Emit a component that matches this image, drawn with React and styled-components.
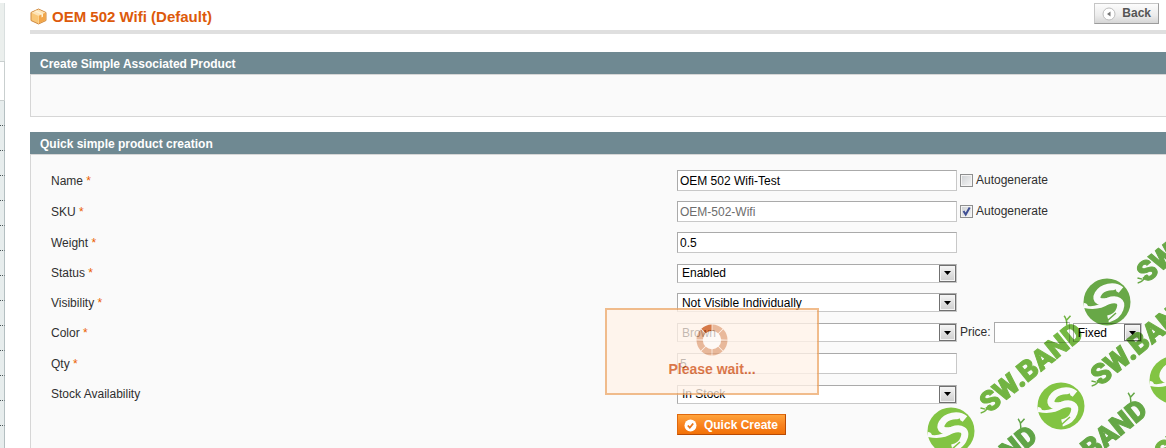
import React from 'react';
import styled, { createGlobalStyle } from 'styled-components';

const Global = createGlobalStyle`
  * { box-sizing: border-box; }
  body {
    margin: 0;
    background: #fff;
    color: #2f2f2f;
    font: 12px/15px "Liberation Sans", Arial, sans-serif;
  }
`;

const Page = styled.div`
  display: flex;
  min-height: 100vh;
`;

const Sidebar = styled.aside`
  display: flex;
  flex-direction: column;
  flex: none;
  width: 5px;
  padding-top: 3px;
`;

const SideTop = styled.div`
  height: 58px;
  background: #ebefed;
  border-right: 1px solid #d9dfdf;
`;

const SideCurrent = styled.div`
  height: 40px;
  background: #fff;
  border: solid #c9cfcf;
  border-width: 1px 1px 1px 0;
`;

const SideItem = styled.div`
  height: 25px;
  background: #e7eded;
  border-right: 1px solid #b4bfc1;
  border-bottom: 1px dotted #4a5658;
  &:last-child {
    flex: 1;
    height: auto;
    border-bottom: 0;
  }
`;

const Main = styled.main`
  display: flex;
  flex-direction: column;
  flex: 1;
  min-width: 0;
  padding-left: 25px;
`;

const Header = styled.header`
  display: flex;
  align-items: center;
  justify-content: space-between;
  height: 34px;
  padding: 0 7px 4px 0;
  border-bottom: 4px solid #dfdfdf;
  margin-bottom: 18px;
`;

const Title = styled.h1`
  display: flex;
  align-items: center;
  gap: 5px;
  margin: 0;
  padding-top: 7px;
  color: #dd5a0b;
  font-size: 15px;
  line-height: 18px;
`;

const Button = styled.button`
  display: flex;
  align-items: center;
  gap: ${p => (p.$primary ? 7 : 6)}px;
  height: 21px;
  padding: 1px 7px 0 ${p => (p.$primary ? 6 : 7)}px;
  border: 1px solid;
  border-color: ${p => (p.$primary ? '#e0680c #b84a04 #b84a04 #e0680c' : '#c6c6c6 #9c9c9c #9c9c9c #c6c6c6')};
  background: ${p => (p.$primary
    ? 'linear-gradient(#ffa43c, #f98320 50%, #f27108)'
    : 'linear-gradient(#fcfcfc, #ececec 60%, #d6d6d6)')};
  color: ${p => (p.$primary ? '#fff' : '#555')};
  font: bold 12px/15px "Liberation Sans", Arial, sans-serif;
`;

const Panel = styled.section`
  display: flex;
  flex-direction: column;
  flex: ${p => (p.$fill ? '1' : 'none')};
  margin-bottom: ${p => (p.$fill ? 0 : 15)}px;
`;

const PanelTitle = styled.h2`
  margin: 0;
  padding: 5px 10px 2px;
  background: #6f8992;
  color: #fff;
  font-size: 12px;
  line-height: 15px;
`;

const PanelBody = styled.div`
  flex: 1;
  min-height: 43px;
  padding: 10px 0 0 20px;
  border: solid #d6d6d6;
  border-width: 1px 0 ${p => (p.$open ? 0 : 1)}px 1px;
  background: #fafafa;
`;

const Row = styled.div`
  display: grid;
  grid-template-columns: 1.28fr 1fr;
  align-items: center;
  min-height: ${p => p.$height || 31}px;
`;

const Label = styled.label`
  justify-self: start;
  padding-top: 1px;
`;

const Required = styled.span`
  color: #eb5e00;
`;

const Controls = styled.div`
  display: flex;
  align-items: center;
  gap: 3px;
`;

const Input = styled.input`
  width: ${p => p.$width}px;
  height: 21px;
  padding: 0 2px;
  border: 1px solid;
  border-color: #aaa #c8c8c8 #c8c8c8 #aaa;
  border-radius: 0;
  background: #fff;
  color: ${p => (p.disabled ? '#6d6d6d' : '#000')};
  font: inherit;
`;

const SelectBox = styled.div`
  display: grid;
  width: ${p => p.$width}px;
  height: 19px;
  > * { grid-area: 1 / 1; }
`;

const SelectInput = styled.select`
  appearance: none;
  width: 100%;
  height: 19px;
  padding: 1px 18px 0 4px;
  border: 1px solid;
  border-color: #aaa #c8c8c8 #c8c8c8 #aaa;
  border-radius: 0;
  background: #fff;
  color: #000;
  font: inherit;
`;

const Arrow = styled.span`
  display: flex;
  align-items: center;
  justify-content: center;
  align-self: center;
  justify-self: end;
  width: 17px;
  height: 17px;
  margin-right: 1px;
  border: 1px solid #707070;
  background: linear-gradient(#f6f6f6, #dcdcdc 60%, #cfcfcf);
  box-shadow: inset 0 0 0 1px #f4f4f4;
  pointer-events: none;
`;

const Check = styled.label`
  display: flex;
  align-items: center;
  gap: 3px;
`;

const CheckBox = styled.span`
  display: grid;
  > * { grid-area: 1 / 1; }
  svg { pointer-events: none; }
`;

const CheckInput = styled.input`
  appearance: none;
  width: 13px;
  height: 13px;
  margin: 0;
  border: 1px solid #8e8f8f;
  background: linear-gradient(135deg, #cdd0d3, #f6f6f6);
  box-shadow: inset 0 0 0 1px #f4f4f4;
`;

const Loader = styled.div`
  position: fixed;
  top: 308px;
  left: 605px;
  display: flex;
  flex-direction: column;
  align-items: center;
  gap: 4px;
  width: 214px;
  height: 87px;
  padding-top: 14px;
  border: 2px solid #eda868;
  background: #fff2e8;
  color: #d04e10;
  font-size: 14px;
  font-weight: bold;
  line-height: 18px;
  opacity: 0.76;
`;

const Watermark = styled.svg`
  position: fixed;
  right: 0;
  bottom: 0;
  width: 266px;
  height: 218px;
  overflow: hidden;
  pointer-events: none;
  mix-blend-mode: multiply;
  font: 900 28px Roboto, "Liberation Sans", Arial, sans-serif;
`;

const BoxIcon = () => (
  <svg width="17" height="17" viewBox="0 0 17 17" aria-hidden="true">
    <path d="M1 4.500 8.500 1 16 4.500v8L8.500 16 1 12.500z" fill="#f9c777" stroke="#cf8a42" />
    <path d="M1.500 4.700 8.500 1.500l7 3.200-7 3.300z" fill="#fde3b6" />
    <path d="M8.500 8v7.500l7-3.300V4.700z" fill="#f2a64a" />
    <path d="M4.500 3.300 11.500 6.600v3l1.500-.8V6L6 2.600z" fill="#fff3d6" />
    <path d="M8.500 8v7.500" stroke="#fbd28e" />
  </svg>
);

const BackIcon = () => (
  <svg width="14" height="14" viewBox="0 0 14 14" aria-hidden="true">
    <circle cx="7" cy="7" r="6" fill="#fff" stroke="#bdbdbd" />
    <path d="M8.500 4.500v5L5 7z" fill="#777" />
  </svg>
);

const OkIcon = () => (
  <svg width="13" height="13" viewBox="0 0 13 13" aria-hidden="true">
    <circle cx="6.500" cy="6.500" r="6" fill="#fff" />
    <path d="m3.800 6.500 2 2.200 3.400-4.200" fill="none" stroke="#e8741a" strokeWidth="1.800" />
  </svg>
);

const Spinner = () => (
  <svg width="32" height="32" viewBox="-16 -16 32 32" aria-hidden="true">
    <circle r="9" fill="#fff" fillOpacity="0.5" />
    {[0, 1, 2, 3, 4, 5, 6, 7].map(i => (
      <path
        key={i}
        d="M.4-15.500A15.500 15.500 0 0 1 10.700-11.200L6.200-6.800A9.200 9.200 0 0 0 .4-9.200z"
        transform={`rotate(${i * 45})`}
        fill={i === 7 ? '#c9500f' : '#e3a37c'}
      />
    ))}
  </svg>
);

const marks = [
  [131, 137, '#74b843'],
  [242, 110, '#6cb044'],
  [288, 7, '#6aac48'],
  [195, 214, '#66aa47'],
  [85, 240, '#62a747'],
  [306, 187, '#74b843'],
];

const discs = [
  [207, 72, '#6aac48'],
  [161, 176, '#85c844'],
  [51, 201, '#85c844'],
  [273, 150, '#85c844'],
];

const Field = ({ id, label, required, height, children }) => (
  <Row $height={height}>
    <Label htmlFor={id}>{label}{required && <Required> *</Required>}</Label>
    <Controls>{children}</Controls>
  </Row>
);

const Select = ({ id, value, width = 280, label }) => (
  <SelectBox $width={width}>
    <SelectInput id={id} aria-label={label}><option>{value}</option></SelectInput>
    <Arrow><svg width="7" height="4" viewBox="0 0 7 4"><path d="M0 0h7L3.500 4z" fill="#000" /></svg></Arrow>
  </SelectBox>
);

const Autogenerate = ({ checked }) => (
  <Check>
    <CheckBox>
      <CheckInput type="checkbox" defaultChecked={checked} />
      {checked && (
        <svg width="13" height="13" viewBox="0 0 13 13">
          <path d="m3.500 6 2.200 3.500 4-7" fill="none" stroke="#3f4f94" strokeWidth="2" />
        </svg>
      )}
    </CheckBox>
    Autogenerate
  </Check>
);

export default function App() {
  return (
    <Page>
      <Global />
      <Sidebar>
        <SideTop />
        <SideCurrent />
        {Array.from({ length: 14 }, (_, i) => <SideItem key={i} />)}
      </Sidebar>
      <Main>
        <Header>
          <Title><BoxIcon />OEM 502 Wifi (Default)</Title>
          <Button type="button"><BackIcon />Back</Button>
        </Header>
        <Panel>
          <PanelTitle>Create Simple Associated Product</PanelTitle>
          <PanelBody />
        </Panel>
        <Panel $fill>
          <PanelTitle>Quick simple product creation</PanelTitle>
          <PanelBody $open>
            <Field id="name" label="Name" required>
              <Input id="name" $width={280} defaultValue="OEM 502 Wifi-Test" />
              <Autogenerate />
            </Field>
            <Field id="sku" label="SKU" required>
              <Input id="sku" $width={280} defaultValue="OEM-502-Wifi" disabled />
              <Autogenerate checked />
            </Field>
            <Field id="weight" label="Weight" required>
              <Input id="weight" $width={280} defaultValue="0.5" />
            </Field>
            <Field id="status" label="Status" required height={30}>
              <Select id="status" value="Enabled" />
            </Field>
            <Field id="visibility" label="Visibility" required height={29}>
              <Select id="visibility" value="Not Visible Individually" />
            </Field>
            <Field id="color" label="Color" required>
              <Select id="color" value="Brown" />
              <label htmlFor="price">Price:</label>
              <Input id="price" $width={76} />
              <Select id="priceType" label="Price type" value="Fixed" width={69} />
            </Field>
            <Field id="qty" label="Qty" required>
              <Input id="qty" $width={280} defaultValue="5" />
            </Field>
            <Field id="stock" label="Stock Availability" height={30}>
              <Select id="stock" value="In Stock" />
            </Field>
            <Row>
              <span />
              <Controls><Button type="button" $primary><OkIcon />Quick Create</Button></Controls>
            </Row>
          </PanelBody>
        </Panel>
      </Main>
      <Watermark viewBox="0 0 266 218" aria-hidden="true">
        {marks.map(([x, y, color]) => (
          <g key={`${x}-${y}`} transform={`translate(${x} ${y}) rotate(-39)`} fill={color}>
            <text y="10" textAnchor="middle" stroke={color} strokeWidth="1">SW.BAND</text>
            <path d="M-57 3q-5 4-11 1m6 0-3-4M54-10q4-4 4-9m-1 5 6-1" fill="none" stroke={color} strokeWidth="1.500" />
          </g>
        ))}
        {discs.map(([x, y, color]) => (
          <g key={`${x}-${y}`} transform={`translate(${x} ${y})`}>
            <circle r="23.500" fill={color} />
            <path d="M14-12C7-18-5-15-9-8c-4 7 3 9 10 7 9-3 15 0 12 8C11 13 5 16 1 17" fill="none" stroke="#fff" strokeWidth="7" />
            <path d="M-23 1q3 0 4 3 9 1 17-5l4 3Q-8 9-23 6z" fill="#fff" />
            <path d="m0 19 9-8M3-9l6-3" fill="none" stroke={color} strokeWidth="1.500" />
          </g>
        ))}
      </Watermark>
      <Loader role="status"><Spinner />Please wait...</Loader>
    </Page>
  );
}
